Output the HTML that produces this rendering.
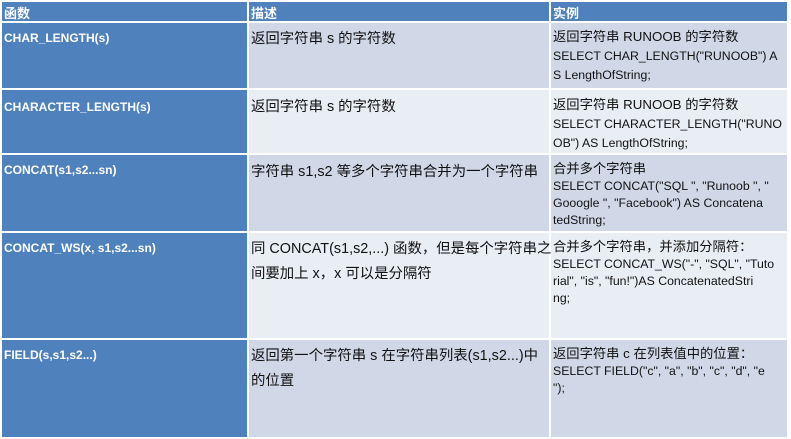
<!DOCTYPE html>
<html><head><meta charset="utf-8"><style>
body{margin:0;width:791px;height:439px;background:#fff;position:relative;overflow:hidden;font-family:"Liberation Sans","Noto Sans CJK SC",sans-serif;}
.c{position:absolute;box-sizing:border-box;}
.b{background:#4f81bd;}
.d{background:#d0d8e8;}
.l{background:#e9edf4;}
.t{position:absolute;white-space:nowrap;color:#111;font-size:12.3px;}
.h{position:absolute;white-space:nowrap;color:#fff;font-weight:bold;font-size:13px;}
.f{position:absolute;white-space:nowrap;color:#fff;font-weight:bold;font-size:12px;}
.z{font-size:13.3px;}
.y{font-size:14.4px;}
</style></head><body>
<div class="c b" style="left:2px;top:2px;width:245px;height:19px"></div>
<div class="c b" style="left:249px;top:2px;width:300px;height:19px"></div>
<div class="c b" style="left:551px;top:2px;width:236px;height:19px"></div>
<div class="h" style="left:4px;top:3px">函数</div>
<div class="h" style="left:251px;top:3px">描述</div>
<div class="h" style="left:553px;top:3px">实例</div>

<div class="c b" style="left:2px;top:23px;width:245px;height:65px"></div>
<div class="c d" style="left:249px;top:23px;width:300px;height:65px"></div>
<div class="c d" style="left:551px;top:23px;width:236px;height:65px"></div>

<div class="c b" style="left:2px;top:90px;width:245px;height:63px"></div>
<div class="c l" style="left:249px;top:90px;width:300px;height:63px"></div>
<div class="c l" style="left:551px;top:90px;width:236px;height:63px"></div>

<div class="c b" style="left:2px;top:155px;width:245px;height:76px"></div>
<div class="c d" style="left:249px;top:155px;width:300px;height:76px"></div>
<div class="c d" style="left:551px;top:155px;width:236px;height:76px"></div>

<div class="c b" style="left:2px;top:233px;width:245px;height:105px"></div>
<div class="c l" style="left:249px;top:233px;width:300px;height:105px"></div>
<div class="c l" style="left:551px;top:233px;width:236px;height:105px"></div>

<div class="c b" style="left:2px;top:340px;width:245px;height:97px"></div>
<div class="c d" style="left:249px;top:340px;width:300px;height:97px"></div>
<div class="c d" style="left:551px;top:340px;width:236px;height:97px"></div>

<div class="f" style="left:4px;top:31px">CHAR_LENGTH(s)</div>
<div class="t y" style="left:251px;top:27px">返回字符串 s 的字符数</div>
<div class="t" style="left:553px;top:27px;line-height:19px"><span class="z">返回字符串 RUNOOB 的字符数</span><br>SELECT CHAR_LENGTH("RUNOOB") A<br>S LengthOfString;</div>

<div class="f" style="left:4px;top:100px">CHARACTER_LENGTH(s)</div>
<div class="t y" style="left:251px;top:95px">返回字符串 s 的字符数</div>
<div class="t" style="left:553px;top:95px;line-height:19px"><span class="z">返回字符串 RUNOOB 的字符数</span><br>SELECT CHARACTER_LENGTH("RUNO<br>OB") AS LengthOfString;</div>

<div class="f" style="left:4px;top:163px">CONCAT(s1,s2...sn)</div>
<div class="t y" style="left:251px;top:160px">字符串 s1,s2 等多个字符串合并为一个字符串</div>
<div class="t" style="left:553px;top:160px;line-height:17px"><span class="z">合并多个字符串</span><br>SELECT CONCAT("SQL ", "Runoob ", "<br>Gooogle ", "Facebook") AS Concatena<br>tedString;</div>

<div class="f" style="left:4px;top:241px">CONCAT_WS(x, s1,s2...sn)</div>
<div class="t y" style="left:251px;top:237px;line-height:25px">同 CONCAT(s1,s2,...) 函数，但是每个字符串之<br>间要加上 x，x 可以是分隔符</div>
<div class="t" style="left:553px;top:238px;line-height:17px"><span class="z">合并多个字符串，并添加分隔符：</span><br>SELECT CONCAT_WS("-", "SQL", "Tuto<br>rial", "is", "fun!")AS ConcatenatedStri<br>ng;</div>

<div class="f" style="left:4px;top:348px">FIELD(s,s1,s2...)</div>
<div class="t y" style="left:251px;top:344px;line-height:25px">返回第一个字符串 s 在字符串列表(s1,s2...)中<br>的位置</div>
<div class="t" style="left:553px;top:345px;line-height:17px"><span class="z">返回字符串 c 在列表值中的位置：</span><br>SELECT FIELD("c", "a", "b", "c", "d", "e<br>");</div>
</body></html>
